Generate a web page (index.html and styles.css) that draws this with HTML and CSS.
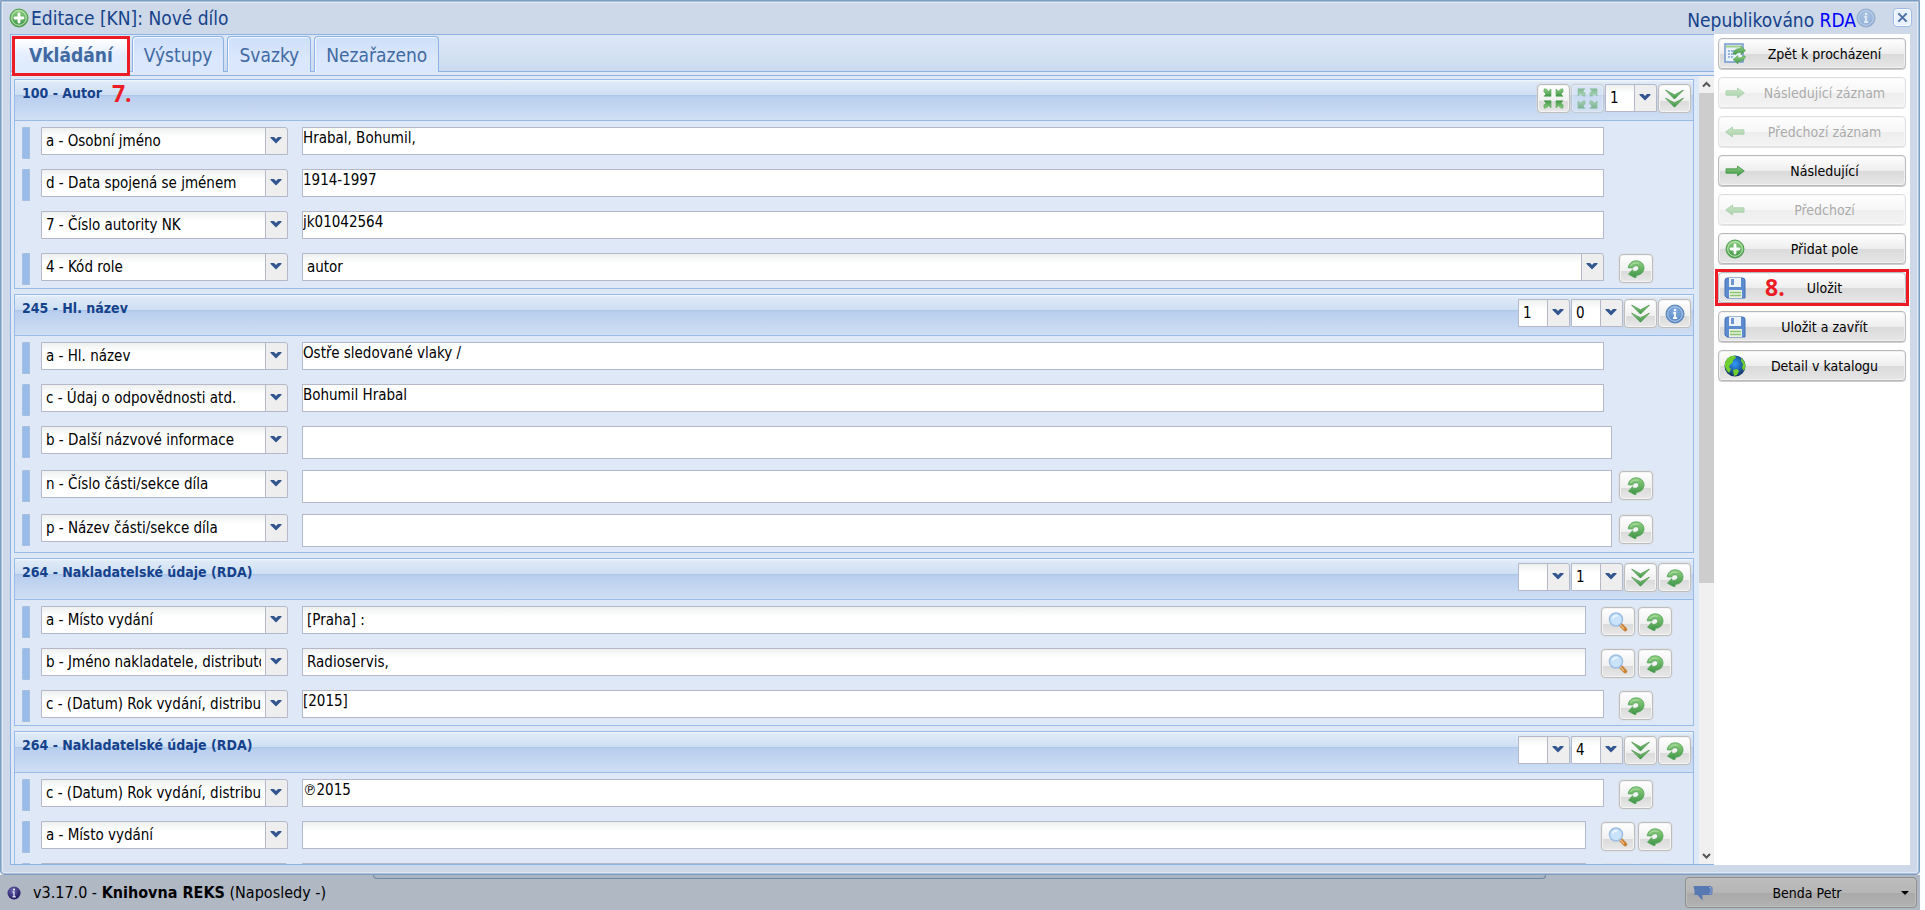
FILE: index.html
```html
<!DOCTYPE html>
<html lang="cs">
<head>
<meta charset="utf-8">
<title>Editace [KN]: Nové dílo</title>
<link rel="stylesheet" href="styles.css">
</head>
<body>
<svg class="defs" aria-hidden="true">
  <defs>
    <linearGradient id="green" x1="0" y1="0" x2="0" y2="1"><stop offset="0" stop-color="#8fd07f"/><stop offset="1" stop-color="#3f9448"/></linearGradient>
    <radialGradient id="blue" cx=".5" cy=".35" r=".7"><stop offset="0" stop-color="#8bb3e2"/><stop offset="1" stop-color="#4a7dbd"/></radialGradient>
    <radialGradient id="sea" cx=".5" cy=".4" r=".6"><stop offset="0" stop-color="#2e9bff"/><stop offset="1" stop-color="#14305e"/></radialGradient>
    <radialGradient id="navy" cx=".4" cy=".3" r=".8"><stop offset="0" stop-color="#6a66b0"/><stop offset="1" stop-color="#140a50"/></radialGradient>
  </defs>
  <symbol id="i-add" viewBox="0 0 20 20"><circle cx="10" cy="10" r="9" fill="url(#green)" stroke="#4f9e50"/><circle cx="10" cy="10" r="7.3" fill="none" stroke="#c5e8bb"/><path d="M10 6v8M6 10h8" stroke="#fff" stroke-width="2.8" stroke-linecap="round"/></symbol>
  <symbol id="i-info" viewBox="0 0 20 20"><circle cx="10" cy="10" r="9" fill="url(#blue)" stroke="#5b83b5"/><circle cx="10" cy="10" r="7.3" fill="none" stroke="#b5cfee"/><path d="M8.3 8.8H10V14M8 14.2h4.2" stroke="#fff" stroke-width="1.7" fill="none"/><circle cx="10" cy="6" r="1.2" fill="#fff"/></symbol>
  <symbol id="i-undo" viewBox="0 0 18 18"><path d="M1.200 7.800C1.800 3.600 4.900.8 9.200.8c4.500 0 7.800 3.100 7.800 7.100 0 4.100-3.200 7.300-7.700 7.400L9 17.600 7.500 17.600 1.500 14.200 5.600 9.600 5.900 11.200c3 .8 5.700-.6 5.900-2.900.1-1.600-1-2.600-2.600-2.600C7.500 5.700 6.400 6.600 5.600 8z" fill="url(#green)" stroke="#4fa356" stroke-width=".8"/><path d="M3.500 6C5 3.300 8.500 2.300 11.500 3.500" stroke="#b4deaa" fill="none"/></symbol>
  <symbol id="i-down" viewBox="0 0 20 20"><path d="M.7 1.200 10 6.200 19.300 1.200 10 10.600z" fill="url(#green)" stroke="#3f8f43" stroke-width=".8"/><path d="M.7 9.700 10 14.700 19.300 9.700 10 19.100z" fill="url(#green)" stroke="#3f8f43" stroke-width=".8"/></symbol>
  <symbol id="i-next" viewBox="0 0 20 12"><path d="M1 3.800h11.500V1L19.300 6l-6.800 5V8.200H1z" fill="url(#green)" stroke="#4a9a50" stroke-width=".9"/></symbol>
  <symbol id="i-prev" viewBox="0 0 20 12"><path d="M19 3.800H7.500V1L.7 6l6.800 5V8.200H19z" fill="url(#green)" stroke="#4a9a50" stroke-width=".9"/></symbol>
  <symbol id="i-arrow" viewBox="0 0 9 9"><path d="M1.200.8 3.600 1.300 5.600 3.200 8 1v7.300H1L3 6 .8 3.800z" fill="url(#green)" stroke="#55a558" stroke-width=".6"/></symbol>
  <symbol id="i-in" viewBox="0 0 21 21"><use href="#i-arrow" width="9" height="9"/><use href="#i-arrow" width="9" height="9" transform="translate(21 0) scale(-1 1)"/><use href="#i-arrow" width="9" height="9" transform="translate(0 21) scale(1 -1)"/><use href="#i-arrow" width="9" height="9" transform="translate(21 21) scale(-1 -1)"/></symbol>
  <symbol id="i-out" viewBox="0 0 21 21"><use href="#i-arrow" width="9" height="9" transform="translate(9 9) scale(-1 -1)"/><use href="#i-arrow" width="9" height="9" transform="translate(12 9) scale(1 -1)"/><use href="#i-arrow" width="9" height="9" transform="translate(9 12) scale(-1 1)"/><use href="#i-arrow" width="9" height="9" transform="translate(12 12)"/></symbol>
  <symbol id="i-find" viewBox="0 0 20 20"><path d="M11.500 11.500 17.200 17.400" stroke="#c98136" stroke-width="4" stroke-linecap="round"/><path d="M12 12.500 16 16.800" stroke="#f0c28a" stroke-width="1.200"/><circle cx="8" cy="7.500" r="6.500" fill="#c9e3fb" stroke="#9dbde4" stroke-width="1.500"/><path d="M4.500 6.500c1-2.500 3-3 5-2.800" stroke="#eef7ff" stroke-width="1.500" fill="none"/></symbol>
  <symbol id="i-save" viewBox="0 0 22 22"><path d="M1 3.500Q1 1 3.500 1h15Q21 1 21 3.500V21H3L1 19z" fill="#5d8bd0" stroke="#4470b4"/><path d="M5 1h12v9H5z" fill="#eef3fa"/><path d="M7 2h3v6H7z" fill="#7095cf"/><path d="M5 13h13v8H5z" fill="#e9f2e2"/><path d="M6 15.500h11M6 18.500h11" stroke="#8cc474" stroke-width="1.600"/></symbol>
  <symbol id="i-globe" viewBox="0 0 22 22"><circle cx="11" cy="11" r="10.500" fill="url(#sea)"/><path d="M3 4Q7 0 11 1L12 3 9 5 9 7 6 10 5 12 7 14 5 18Q0 13 1 8zM17 3q4 3 4.500 8l-1.500 5-2-3 1-4-2-3zM9 15l4-1 2 2-2 4-3 1z" fill="#72d02e"/></symbol>
  <symbol id="i-back" viewBox="0 0 22 22"><path d="M1 1h18v18H1z" fill="#e9f1fb" stroke="#7499cf" stroke-width="1.500"/><path d="M2 3.500h16" stroke="#9fd08c" stroke-width="2"/><path d="M4 8h2M4 11h2M4 14h2M7 8h5M7 11h3M7 14h2" stroke="#7ea2d8" stroke-width="1.500"/><path d="M9 11q1-6 8-5.500V3l4.500 4.500L17 12V9.500q-4-.5-5 2z" fill="url(#green)" stroke="#4c9b4e" stroke-width=".5"/><path d="M21.500 13q-1 6-7.500 5.500V21L9 16.500 14 12.500V15q4 .5 5-2z" fill="url(#green)" stroke="#4c9b4e" stroke-width=".5"/></symbol>
  <symbol id="i-chat" viewBox="0 0 20 16"><path d="M.5 1h17l2 1.500v6l-1.500 1.500h-8.500v5.500L4.500 10H1.500Q2 6 .5 1z" fill="#5878b2"/><path d="M16 2.500h2v6h-2" stroke="#8ea6d0" fill="none"/></symbol>
  <symbol id="i-ball" viewBox="0 0 14 14"><circle cx="7" cy="7" r="6.500" fill="url(#navy)"/><path d="M5.500 6H7v4.500M5.500 10.700h3.200" stroke="#d8d8f0" stroke-width="1.400" fill="none"/><circle cx="7" cy="3.500" r="1" fill="#fff"/></symbol>
</svg>

<main class="window">
  <header class="titlebar">
    <svg class="ic20"><use href="#i-add"/></svg>
    <h1>Editace [KN]: Nové dílo</h1>
    <p class="state">Nepublikováno <a href="#rda">RDA</a></p>
    <svg class="ic20 faded"><use href="#i-info"/></svg>
    <button class="close" aria-label="Zavřít"><svg viewBox="0 0 12 12"><path d="M1.500 1.500 10.500 10.500M10.500 1.500 1.500 10.500" stroke="#4c6fa5" stroke-width="2.200"/></svg></button>
  </header>

  <div class="columns">
    <section class="editor">
      <nav class="tabs" role="tablist">
        <button class="tab active" role="tab" aria-selected="true">Vkládání</button>
        <button class="tab" role="tab">Výstupy</button>
        <button class="tab" role="tab">Svazky</button>
        <button class="tab" role="tab">Nezařazeno</button>
      </nav>
      <div class="scrollarea">
        <div class="fields" id="fields"></div>
        <div class="scrollbar" aria-hidden="true">
          <svg viewBox="0 0 15 17"><path d="M4 10.500 7.500 7 11 10.500" fill="none" stroke="#555" stroke-width="2"/></svg>
          <div class="thumb"></div>
          <svg class="end" viewBox="0 0 15 17"><path d="M4 7 7.500 10.500 11 7" fill="none" stroke="#555" stroke-width="2"/></svg>
        </div>
      </div>
    </section>

    <aside class="sidebar">
      <button class="action"><svg class="ic22"><use href="#i-back"/></svg><span>Zpět k procházení</span></button>
      <button class="action" disabled><svg class="ic20"><use href="#i-next"/></svg><span>Následující záznam</span></button>
      <button class="action" disabled><svg class="ic20"><use href="#i-prev"/></svg><span>Předchozí záznam</span></button>
      <button class="action"><svg class="ic20"><use href="#i-next"/></svg><span>Následující</span></button>
      <button class="action" disabled><svg class="ic20"><use href="#i-prev"/></svg><span>Předchozí</span></button>
      <button class="action"><svg class="ic20"><use href="#i-add"/></svg><span>Přidat pole</span></button>
      <div class="marked"><button class="action"><svg class="ic22"><use href="#i-save"/></svg><span>Uložit</span></button><b class="step step8">8.</b></div>
      <button class="action"><svg class="ic22"><use href="#i-save"/></svg><span>Uložit a zavřít</span></button>
      <button class="action"><svg class="ic22"><use href="#i-globe"/></svg><span>Detail v katalogu</span></button>
    </aside>
  </div>
</main>

<footer class="status">
  <div class="tray"></div>
  <svg class="ball"><use href="#i-ball"/></svg>
  <p>v3.17.0 - <b>Knihovna REKS</b> (Naposledy -)</p>
  <button class="user"><svg class="chat"><use href="#i-chat"/></svg><span>Benda Petr</span><i class="caret"></i></button>
</footer>
<script src="app.js"></script>
</body>
</html>
```
FILE: styles.css
```css
* { box-sizing: border-box; }
body {
  margin: 0;
  padding-right: 5px;
  height: 100vh;
  display: flex;
  flex-direction: column;
  overflow: hidden;
  background: #fff;
  color: #000;
  font: 15px/20px "DejaVu Sans Condensed", "DejaVu Sans", sans-serif;
}
button, select, input, textarea { font: inherit; color: inherit; margin: 0; }
h1, h2, p { margin: 0; font-weight: normal; }
svg { display: block; flex: none; }
.defs { position: absolute; width: 0; height: 0; }
.ic20 { width: 20px; height: 20px; }
.ic22 { width: 22px; height: 22px; }
.faded { opacity: .5; }

.window {
  flex: 1;
  min-height: 0;
  display: flex;
  flex-direction: column;
  padding: 0 9px 9px;
  background: #cdd9e8;
  border: 1px solid #7f9dbf;
  border-radius: 0 0 4px 4px;
  box-shadow: inset 0 0 0 1px #a9bfdb, inset 0 0 0 2px #dfe8f2;
}
.titlebar { height: 33px; display: flex; align-items: center; color: #15428b; font-size: 19px; line-height: 24px; }
.titlebar .ic20:first-child { margin: 0 2px 0 -1px; }
.titlebar h1 { flex: 1; height: 20px; margin-bottom: 2px; overflow: hidden; font-size: 19px; line-height: 22px; }
.state { padding-top: 4px; }
.state a { color: #00f; text-decoration: none; }
.close {
  width: 19px; height: 19px; padding: 3px; margin: 0 -2px 0 17px;
  border: 1px solid #9dbbe6; border-radius: 4px; background: #e8f1fd;
  box-shadow: inset 0 0 0 1px #fff;
}
.close svg { width: 11px; height: 11px; }

.columns { flex: 1; min-height: 0; display: flex; }
.editor { flex: 1; min-width: 0; display: flex; flex-direction: column; border: solid #8db2e3; border-width: 1px 0 1px 1px; background: #dfe8f6; }
.tabs { height: 41px; padding: 1px 1px 0; display: flex; align-items: flex-start; gap: 3px; background: linear-gradient(#dde8f7, #cbdbef 36px, #8db2e3 36px, #8db2e3 37px, #dfe8f6 37px, #dfe8f6 40px, #8db2e3 40px); }
.tab {
  height: 36px; padding: 0 11px;
  border: 1px solid #8db2e3; border-bottom: 0; border-radius: 4px 4px 0 0;
  background: linear-gradient(#cddff9, #dbe7fd 60%, #dbe7fd);
  box-shadow: inset 1px 1px 0 #f0f5fe;
  font-size: 19px; line-height: 32px; color: #416aa3;
}
.tab.active { height: 40px; padding: 0 14px 4px; margin-right: -1px; border: 3px solid #ed1c24; border-radius: 0; background: linear-gradient(#fff, #e3edfd 50%, #deecfd); font-weight: bold; box-shadow: none; }

.scrollarea { flex: 1; min-height: 0; display: flex; }
.fields { flex: 1; min-width: 0; overflow: hidden; padding: 3px 5px 0 3px; display: flex; flex-direction: column; gap: 5px; }
.scrollbar { width: 15px; display: flex; flex-direction: column; background: #f0f0f0; }
.scrollbar svg { width: 15px; height: 17px; }
.scrollbar .end { margin-top: auto; }
.thumb { height: 65%; max-height: 490px; background: #cdcdcd; }

.panel { flex: none; border: 1px solid #99bbe8; }
.panel-head {
  height: 41px; display: flex; align-items: flex-start; padding: 4px 2px 0 7px;
  border-bottom: 1px solid #99bbe8;
  background: linear-gradient(#f3f8fd 0, #dfeaf7 2px, #cedff3 15px, #a9c4ea 15px, #b9cfee 17px, #cfdff4 100%);
}
.panel-head h2 { font-weight: bold; font-size: 14px; line-height: 18px; color: #15428b; }
.step { color: #ed1c24; font: bold 23px/18px "Open Sans", "Noto Sans", sans-serif; }
.panel-head .step { margin-left: 10px; }
.tools { margin-left: auto; display: flex; gap: 1px; }
.panel-body { padding: 6px 0 0 7px; }

.row { display: flex; height: 42px; align-items: flex-start; }
.row.tall { height: 44px; }
.row:last-child { height: 35px; }
.row.tall:last-child { height: 38px; }
.handle { width: 8px; height: 32px; margin-right: 11px; background: #99bbe8; border: 1px dotted #b3c4dc; }
.handle.off { visibility: hidden; }

.value {
  flex: 1; min-width: 0; height: 28px; border: 1px solid #b5b8c8; border-radius: 0; background: #fff;
  display: block; resize: none; overflow: hidden; padding: 0; outline: 0;
}
input.value { padding-left: 4px; background: linear-gradient(#eef0f0, #fff 9px); }
.tall .value { height: 33px; }
select, select.value {
  appearance: none; height: 28px; border: 1px solid #b5b8c8; border-radius: 0 3px 0 0; color: #000;
  padding: 0 26px 0 4px;
  background:
    url("data:image/svg+xml,%3Csvg xmlns='http://www.w3.org/2000/svg' width='12' height='8'%3E%3Cpath d='M.5 1H4L6 3 8 1H11.500V2L6 7.500.5 2z' fill='%2332548f'/%3E%3C/svg%3E") right 5px top 8px no-repeat,
    linear-gradient(90deg, #b5b8c8 1px, #eee 1px) right / 22px 100% no-repeat,
    linear-gradient(#eef0f0, #fff 9px);
}
.code { width: 247px; margin-right: 14px; }
select.small { width: 52px; }
.extra { width: 89px; padding: 1px 0 0 15px; display: flex; gap: 3px; }
.pair .extra { width: 107px; }
.tall .extra { width: 81px; padding-left: 7px; }

.iconbtn {
  width: 34px; height: 29px; padding: 0; display: flex; align-items: center; justify-content: center;
  border: 1px solid #bdbdbd; border-radius: 4px;
  background: linear-gradient(#fff, #f0f0f0 58%, #dadada 58%, #e8e8e8);
  box-shadow: inset 0 0 0 1px #f4f4f4, 0 0 0 1px #dcdcdc80;
}
.tools .iconbtn { width: 33px; }
.iconbtn:disabled { opacity: .55; background: #dbe6f5; }
.i-undo { width: 18px; height: 18px; }
.i-down { width: 19px; height: 19px; }
.i-in, .i-out { width: 21px; height: 21px; }
.i-find, .i-info { width: 20px; height: 20px; }

.sidebar { width: 196px; padding: 4px; display: flex; flex-direction: column; gap: 8px; background: #fff; }
.action {
  width: 100%; height: 31px; padding: 0 2px 0 5px; flex: none; display: flex; align-items: center;
  border: 1px solid #b9b9b9; border-radius: 4px;
  background: linear-gradient(#fff, #ededed 52%, #dadada 52%, #e6e6e6);
  box-shadow: inset 0 0 0 1px #f1f1f1, 0 1px 0 #ccc;
  font-size: 14px;
}
.action span { flex: 1; text-align: center; }
.action:disabled { opacity: .45; color: #444; }
.action .ic20 { margin: 0 1px; }
.marked { position: relative; outline: 3px solid #ed1c24; }
.step8 { position: absolute; left: 47px; top: 6px; }

.status { height: 35px; flex: none; display: flex; align-items: center; padding: 0 3px 0 7px; background: #b0b8c4; position: relative; font-size: 16px; }
.tray { position: absolute; left: 373px; right: 374px; top: 0; height: 4px; border: solid #70879f; border-width: 0 1px 1px; border-radius: 0 0 4px 4px; background: #a9b5c2; }
.ball { width: 14px; height: 14px; margin-right: 12px; }
.status p { flex: 1; }
.user { width: 232px; height: 31px; padding: 0 7px; display: flex; align-items: center; border: 1px solid #8d8d8d; border-radius: 4px; background: linear-gradient(#bdbdbd, #b6b6b6 50%, #a9a9a9 50%, #b2b2b2); box-shadow: inset 0 0 0 1px #bfbfbf; font-size: 14px; }
.user span { flex: 1; text-align: center; }
.chat { width: 20px; height: 16px; }
.caret { border: 4px solid transparent; border-top-color: #000; border-bottom: 0; }
```
FILE: app.js
```js
const panels = [
  { title: "100 - Autor", step: "7.", tools: ["in", "out", "=1", "down"], rows: [
    { code: "a - Osobní jméno", value: "Hrabal, Bohumil," },
    { code: "d - Data spojená se jménem", value: "1914-1997" },
    { code: "7 - Číslo autority NK", value: "jk01042564", fixed: true },
    { code: "4 - Kód role", value: "autor", kind: "select", extra: ["undo"] } ] },
  { title: "245 - Hl. název", tools: ["=1", "=0", "down", "info"], rows: [
    { code: "a - Hl. název", value: "Ostře sledované vlaky /" },
    { code: "c - Údaj o odpovědnosti atd.", value: "Bohumil Hrabal" },
    { code: "b - Další názvové informace", value: "", tall: true },
    { code: "n - Číslo části/sekce díla", value: "", tall: true, extra: ["undo"] },
    { code: "p - Název části/sekce díla", value: "", tall: true, extra: ["undo"] } ] },
  { title: "264 - Nakladatelské údaje (RDA)", tools: ["=", "=1", "down", "undo"], rows: [
    { code: "a - Místo vydání", value: "[Praha] :", kind: "input", extra: ["find", "undo"] },
    { code: "b - Jméno nakladatele, distributora", value: "Radioservis,", kind: "input", extra: ["find", "undo"] },
    { code: "c - (Datum) Rok vydání, distribuce", value: "[2015]", extra: ["undo"] } ] },
  { title: "264 - Nakladatelské údaje (RDA)", tools: ["=", "=4", "down", "undo"], rows: [
    { code: "c - (Datum) Rok vydání, distribuce", value: "℗2015", extra: ["undo"] },
    { code: "a - Místo vydání", value: "", kind: "input", extra: ["find", "undo"] },
    { code: "b - Jméno nakladatele, distributora", value: "", kind: "input", extra: ["find", "undo"] } ] }
];
const names = { in: "Sbalit", out: "Rozbalit", down: "Další podpole", info: "Nápověda", undo: "Vrátit", find: "Hledat" };
const iconButton = n => `<button class="iconbtn" aria-label="${names[n]}"${n === "out" ? " disabled" : ""}><svg class="i-${n}"><use href="#i-${n}"/></svg></button>`;
const tool = t => t[0] === "="
  ? `<select class="small" aria-label="Indikátor"><option>${t.slice(1)}</option></select>`
  : iconButton(t);
const field = r => {
  const label = `aria-label="${r.code}"`;
  if (r.kind === "select") return `<select class="value" ${label}><option>${r.value}</option></select>`;
  if (r.kind === "input") return `<input class="value" type="text" ${label} value="${r.value}">`;
  return `<textarea class="value" rows="1" ${label}>${r.value}</textarea>`;
};
const row = r => `<div class="row${r.tall ? " tall" : ""}${r.extra && r.extra.length > 1 ? " pair" : ""}">
  <div class="handle${r.fixed ? " off" : ""}"></div>
  <select class="code" aria-label="Podpole"><option>${r.code}</option></select>
  ${field(r)}<div class="extra">${(r.extra || []).map(iconButton).join("")}</div></div>`;
document.getElementById("fields").innerHTML = panels.map(p => `<section class="panel">
  <div class="panel-head"><h2>${p.title}</h2>${p.step ? `<b class="step">${p.step}</b>` : ""}<div class="tools">${p.tools.map(tool).join("")}</div></div>
  <div class="panel-body">${p.rows.map(row).join("")}</div></section>`).join("");
```
